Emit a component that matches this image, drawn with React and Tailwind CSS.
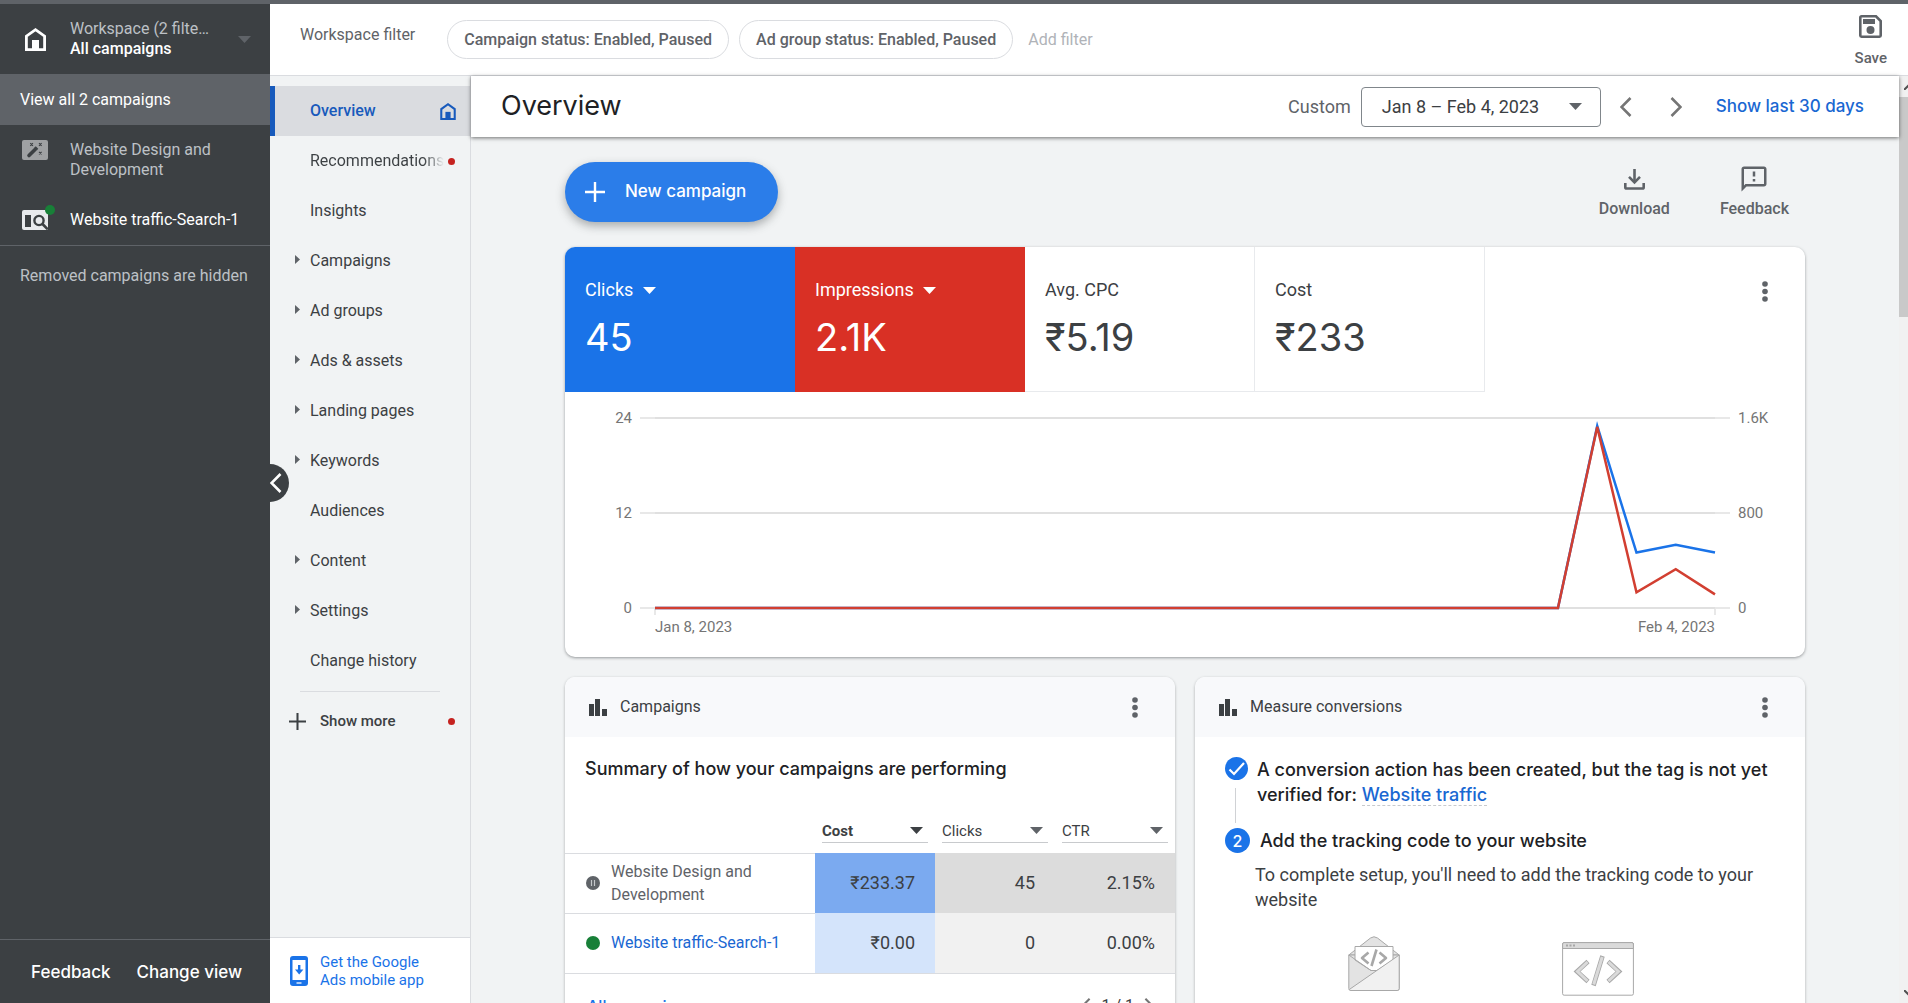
import React from "react";
import { MdOutlineFeedback } from "react-icons/md";

const navItems = [
  { label: "Recommendations", dot: true },
  { label: "Insights" },
  { label: "Campaigns", expandable: true },
  { label: "Ad groups", expandable: true },
  { label: "Ads & assets", expandable: true },
  { label: "Landing pages", expandable: true },
  { label: "Keywords", expandable: true },
  { label: "Audiences" },
  { label: "Content", expandable: true },
  { label: "Settings", expandable: true },
  { label: "Change history" },
];

const metrics = [
  { label: "Clicks", value: "45", tone: "bg-[#1a73e8] text-white", menu: true },
  { label: "Impressions", value: "2.1K", tone: "bg-[#d93025] text-white", menu: true },
  { label: "Avg. CPC", value: "₹5.19", tone: "border-r border-b border-[#e8eaed] text-[#3c4043]" },
  { label: "Cost", value: "₹233", tone: "border-r border-b border-[#e8eaed] text-[#3c4043]" },
];

// One value per day, Jan 8 - Feb 4
const clicks = [...Array(24).fill(0), 23, 7, 8, 7];
const impressions = [...Array(24).fill(0), 1525, 132, 326, 115];

const toPoints = (values, max) =>
  values
    .map((v, i) => `${15 + (i * 1060) / (values.length - 1)},${191 - (v / max) * 190}`)
    .join(" ");

const HomeIcon = ({ className }) => (
  <svg viewBox="0 0 21 23" className={className} fill="none" aria-hidden="true">
    <path d="M1.4 21.6V8.2L10.5 1.7l9.1 6.5v13.4z" stroke="currentColor" strokeWidth="2.8" />
    <path d="M7 12h7v10H7z" fill="currentColor" />
  </svg>
);

const Chevron = ({ className, flip }) => (
  <svg viewBox="0 0 12 20" className={className} fill="none" aria-hidden="true">
    <path
      d={flip ? "M1.5 1l9 9-9 9" : "M10.5 1l-9 9 9 9"}
      stroke="currentColor"
      strokeWidth="2.6"
    />
  </svg>
);

const Caret = ({ className }) => (
  <svg viewBox="0 0 13 7" className={className} aria-hidden="true">
    <path d="M0 0h13L6.5 7z" fill="currentColor" />
  </svg>
);

const PlusIcon = ({ className }) => (
  <svg viewBox="0 0 20 20" className={className} aria-hidden="true">
    <path d="M10 0v20M0 10h20" stroke="currentColor" strokeWidth="2.4" />
  </svg>
);

const WandIcon = () => (
  <svg viewBox="0 0 26 20" className="h-5 w-[26px] shrink-0" aria-hidden="true">
    <rect width="26" height="20" rx="2" fill="#9fa1a3" />
    <path d="M7 15.5l6.3-6.3" stroke="#3c4043" strokeWidth="3.6" strokeLinecap="round" />
    <path d="M13.6 8.9l1.4-1.4" stroke="#3c4043" strokeWidth="3.6" />
    <path
      d="M8.3 3.2l2.6 2.6M10.9 3.2L8.3 5.8M17 3.2l2.6 2.6M19.6 3.2L17 5.8M17 11.8l2.6 2.6M19.6 11.8L17 14.4"
      stroke="#3c4043"
      strokeWidth="1.2"
    />
  </svg>
);

const SearchCampaignIcon = () => (
  <svg viewBox="0 0 26 20" className="h-5 w-[26px]" aria-hidden="true">
    <rect width="26" height="20" rx="2" fill="#e8eaed" />
    <path d="M3 5h6v12H3z" fill="#3c4043" />
    <circle cx="17" cy="10.5" r="4.6" fill="none" stroke="#3c4043" strokeWidth="2.4" />
    <path d="M20.5 14l5 5" stroke="#3c4043" strokeWidth="2.6" />
  </svg>
);

const SaveIcon = () => (
  <svg viewBox="0 0 23 23" className="size-[23px]" aria-hidden="true">
    <path
      d="M2.5 1.3H17L21.7 6v14.5a1.2 1.2 0 01-1.2 1.2h-18a1.2 1.2 0 01-1.2-1.2v-18a1.2 1.2 0 011.2-1.2z"
      fill="none"
      stroke="currentColor"
      strokeWidth="2.6"
    />
    <path d="M4 4h12v5H4z" fill="currentColor" />
    <circle cx="11.5" cy="15" r="4" fill="currentColor" />
  </svg>
);

const DownloadIcon = () => (
  <svg viewBox="0 0 21 21" className="size-[21px]" fill="none" stroke="currentColor" aria-hidden="true">
    <path d="M10.5 0v13" strokeWidth="2.6" />
    <path d="M5 7.8l5.5 5.5L16 7.8" strokeWidth="2.6" />
    <path d="M1.3 14v4.2a1.3 1.3 0 001.3 1.3h15.8a1.3 1.3 0 001.3-1.3V14" strokeWidth="2.6" />
  </svg>
);

const PhoneIcon = () => (
  <svg viewBox="0 0 18 30" className="h-[30px] w-[18px] shrink-0" aria-hidden="true">
    <rect width="18" height="30" rx="3" fill="#1a73e8" />
    <path d="M2.5 4h13v20h-13z" fill="#fff" />
    <path d="M8 9h2.4v4.5h3L9.2 18.4 5 13.5h3z" fill="#1a73e8" />
    <path d="M6.5 27h5" stroke="#fff" strokeWidth="1.3" />
  </svg>
);

const BarsIcon = () => (
  <svg viewBox="0 0 18 17" className="h-[17px] w-[18px]" fill="#3c4043" aria-hidden="true">
    <path d="M0 5h5v12H0zM6 0h5v17H6zM13 10h5v7h-5z" />
  </svg>
);

const EnvelopeArt = () => (
  <svg viewBox="0 0 52 55" className="h-[55px] w-[52px]" stroke="#a8a8a8" strokeLinejoin="round" aria-hidden="true">
    <path d="M.8 19L22.5 2q3.5-2.5 7 0L51.2 19z" fill="#e3e3e3" />
    <path d="M.8 19h50.4v33.5a2 2 0 01-2 2H2.8a2 2 0 01-2-2z" fill="#e3e3e3" />
    <path d="M7 10.5h38V24L29 34.5h-6L7 24z" fill="#fff" />
    <path d="M1.3 53.5L51.2 19v33.5a2 2 0 01-2 2H2.8q-1 0-1.5-1z" fill="#f1f1f1" />
    <path d="M.8 19L23 34.5h6" fill="none" />
    <path
      d="M20.5 16.5L14 22l6.5 5.5M31.5 16.5L38 22l-6.5 5.5M28.5 13.5l-5 16.5"
      fill="none"
      strokeWidth="2.6"
    />
  </svg>
);

const BrowserArt = () => (
  <svg viewBox="0 0 72 54" className="h-[54px] w-[72px]" stroke="#a8a8a8" aria-hidden="true">
    <rect x=".6" y=".6" width="70.8" height="52.6" rx="1.5" fill="#fff" />
    <path d="M.6 6.5V2Q.6.6 2 .6h68q1.4 0 1.4 1.4v4.5z" fill="#dadada" />
    <path d="M4 3.5h2M7.500 3.500h2M11 3.500h2" strokeWidth="2" />
    <path d="M26 19.5l-11 10 11 10M46 19.5l11 10-11 10M40.5 14l-9 29.5" fill="none" strokeWidth="4.6" />
    <path
      d="M25.5 20l-10 9.5 10 9.5M46.5 20l10 9.5-10 9.5M40.2 15l-8.5 27.5"
      fill="none"
      stroke="#dadada"
      strokeWidth="3"
    />
  </svg>
);

const Kebab = ({ label }) => (
  <button aria-label={label} className="flex w-9 justify-center text-[#5f6368]">
    <svg viewBox="0 0 6 21" className="h-[21px] w-[6px]" fill="currentColor" aria-hidden="true">
      <circle cx="3" cy="3" r="2.8" />
      <circle cx="3" cy="10.5" r="2.8" />
      <circle cx="3" cy="18" r="2.8" />
    </svg>
  </button>
);

const CampaignSidebar = () => (
  <aside className="relative z-20 flex w-[270px] shrink-0 flex-col bg-[#3c4043] text-base leading-5">
    <button className="flex h-[70px] items-center pl-[25px] text-left">
      <HomeIcon className="h-[23px] w-[21px] text-white" />
      <span className="ml-6 w-[140px]">
        <span className="block truncate text-[#bdc1c6]">Workspace (2 filters)</span>
        <span className="block font-medium text-white">All campaigns</span>
      </span>
      <Caret className="ml-7 h-[7px] w-[13px] text-[#5f6368]" />
    </button>
    <a href="#all" className="flex h-[51px] items-center bg-[#5f6368] px-5 text-white">
      View all 2 campaigns
    </a>
    <a href="#design" className="flex py-[15px] pl-[22px] text-[#bdc1c6]">
      <WandIcon />
      <span className="ml-[22px] w-40">Website Design and Development</span>
    </a>
    <a href="#traffic" className="flex border-b border-[#5f6368] py-[15px] pl-[22px] text-white">
      <span className="relative">
        <SearchCampaignIcon />
        <span className="absolute -top-[5px] -right-[7px] size-[10px] rounded-full bg-[#188038]" />
      </span>
      <span className="ml-[22px]">Website traffic-Search-1</span>
    </a>
    <p className="px-5 py-5 text-[#bdc1c6]">Removed campaigns are hidden</p>

    <div className="mt-auto flex h-16 items-center gap-[26px] border-t border-[#5f6368] px-[31px] font-['Inter'] text-[17px] font-medium text-white">
      <button>Feedback</button>
      <button className="whitespace-nowrap">Change view</button>
    </div>

    {/* Collapse handle */}
    <button
      aria-label="Collapse navigation"
      className="absolute top-[460px] left-full flex h-[38px] w-[19px] items-center rounded-r-full bg-[#3c4043] text-white"
    >
      <Chevron className="h-5 w-3" />
    </button>
  </aside>
);

const PageNav = () => (
  <nav className="flex w-[201px] shrink-0 flex-col border-r border-[#dadce0] bg-[#f1f3f4] pt-[10px] text-base text-[#3c4043]">
    <a
      href="#overview"
      className="flex h-[50px] items-center border-l-[5px] border-[#185abc] bg-[#dadce0] pr-[14px] pl-[35px] font-medium text-[#185abc]"
    >
      Overview
      <HomeIcon className="ml-auto h-[17px] w-4" />
    </a>
    {navItems.map((item) => (
      <a
        key={item.label}
        href={"#" + item.label}
        className="flex h-[50px] items-center pr-[15px]"
      >
        <span className="flex w-10 shrink-0 justify-end pr-[10px] pb-[3px]">
          {item.expandable && (
            <svg viewBox="0 0 5 9" className="h-[9px] w-[5px]" fill="#5f6368" aria-hidden="true">
              <path d="M0 0l5 4.500L0 9z" />
            </svg>
          )}
        </span>
        {item.dot ? (
          <>
            <span className="bg-linear-to-r from-[#3c4043] from-85% to-[#f1f3f4] bg-clip-text text-transparent">
              {item.label}
            </span>
            <span className="ml-auto size-[7px] shrink-0 rounded-full bg-[#c5221f]" />
          </>
        ) : (
          item.label
        )}
      </a>
    ))}
    <hr className="mx-[30px] mt-[5px] border-[#dadce0]" />
    <button className="flex items-center py-[18px] pr-[15px] pl-[19px] text-[15px] font-medium">
      <PlusIcon className="mr-[14px] size-[17px]" />
      Show more
      <span className="ml-auto size-[7px] rounded-full bg-[#c5221f]" />
    </button>
    <a
      href="#app"
      className="mt-auto flex h-[66px] items-center gap-3 border-t border-[#dadce0] bg-white pl-5 text-[15px] leading-[18px] text-[#1a73e8]"
    >
      <PhoneIcon />
      <span className="w-28">Get the Google Ads mobile app</span>
    </a>
  </nav>
);

const FilterBar = () => (
  <header className="flex h-[72px] shrink-0 items-center border-b border-[#dadce0] bg-white pr-[21px] pl-[30px] text-base text-[#5f6368]">
    <span className="mb-[10px]">Workspace filter</span>
    <button className="ml-8 h-[39px] rounded-full border border-[#dadce0] px-4 font-medium">
      Campaign status: Enabled, Paused
    </button>
    <button className="ml-[10px] h-[39px] rounded-full border border-[#dadce0] px-4 font-medium">
      Ad group status: Enabled, Paused
    </button>
    <input
      type="text"
      aria-label="Add filter"
      placeholder="Add filter"
      className="ml-[15px] min-w-0 flex-1 outline-none placeholder:text-[#b0b3b8]"
    />
    <button className="flex flex-col items-center gap-[10px] pt-1 text-[15px] leading-5 font-medium">
      <SaveIcon />
      Save
    </button>
  </header>
);

const PageHeader = () => (
  <div className="relative z-10 flex h-[61px] shrink-0 items-center bg-white pr-[35px] pl-[30px] shadow-[0_1px_4px_rgba(0,0,0,0.55)]">
    <h1 className="font-['Inter'] text-[27px] text-[#202124]">Overview</h1>
    <span className="ml-auto text-lg text-[#5f6368]">Custom</span>
    <button className="ml-[10px] flex h-10 w-60 items-center justify-between rounded border border-[#80868b] pr-[18px] pl-5 text-lg text-[#3c4043]">
      Jan 8 – Feb 4, 2023
      <Caret className="h-[7px] w-[13px] text-[#5f6368]" />
    </button>
    <button aria-label="Previous period" className="ml-[19px] text-[#757575]">
      <Chevron className="h-5 w-3" />
    </button>
    <button aria-label="Next period" className="ml-[38px] text-[#757575]">
      <Chevron className="h-5 w-3" flip />
    </button>
    <a href="#last30" className="ml-[34px] font-['Inter'] text-[17px] font-medium text-[#1967d2]">
      Show last 30 days
    </a>
  </div>
);

const Chart = () => (
  <div className="flex px-[35px] pt-4 pb-5 text-[15px] leading-5 text-[#757575]">
    <div className="flex h-[210px] w-8 flex-col justify-between text-right">
      <span>24</span>
      <span>12</span>
      <span>0</span>
    </div>
    <div className="ml-2 min-w-0 flex-1 pt-[9px]">
      <svg viewBox="0 0 1090 200" preserveAspectRatio="none" className="h-[200px] w-full" aria-label="Clicks and impressions by day">
        <path d="M0 1h1090M0 96h1090M0 191h1090M15 191v7M1075 191v7" stroke="#e8e8e8" strokeWidth="2" />
        <path d="M15 1h1060M15 96h1060M15 191h1060" stroke="#e0e0e0" strokeWidth="2" />
        <polyline points={toPoints(clicks, 24)} fill="none" stroke="#1a73e8" strokeWidth="2.5" vectorEffect="non-scaling-stroke" />
        <polyline points={toPoints(impressions, 1600)} fill="none" stroke="#d23f31" strokeWidth="2.5" vectorEffect="non-scaling-stroke" />
      </svg>
      <div className="flex justify-between px-[15px]">
        <span>Jan 8, 2023</span>
        <span>Feb 4, 2023</span>
      </div>
    </div>
    <div className="ml-2 flex h-[210px] w-8 flex-col justify-between">
      <span>1.6K</span>
      <span>800</span>
      <span>0</span>
    </div>
  </div>
);

const Card = ({ title, children }) => (
  <section className="min-w-0 overflow-hidden rounded-[10px] bg-white shadow-[0_1px_3px_rgba(60,64,67,0.4)]">
    <header className="flex h-[60px] items-center bg-[#f8f9fb] pr-[22px] pl-6 text-base text-[#3c4043]">
      <BarsIcon />
      <h2 className="ml-[13px]">{title}</h2>
      <span className="ml-auto">
        <Kebab label={title + " options"} />
      </span>
    </header>
    {children}
  </section>
);

const ColumnSelect = ({ name, bold }) => (
  <th className="w-[120px] pb-[10px] pl-[7px] font-normal">
    <span className="flex w-[106px] items-center border-b border-[#c8cacd] pb-px">
      <select
        aria-label={name + " column"}
        className={
          "h-[21px] flex-1 appearance-none text-[15px] outline-none " +
          (bold ? "font-bold" : "font-normal")
        }
      >
        <option>{name}</option>
      </select>
      <Caret
        className={
          "pointer-events-none mr-[5px] h-[7px] w-[13px] " +
          (bold ? "text-[#3c4043]" : "text-[#5f6368]")
        }
      />
    </span>
  </th>
);

const CampaignsCard = () => (
  <Card title="Campaigns">
    <h3 className="px-5 pt-5 font-['Inter'] text-lg leading-6 font-medium text-[#202124]">
      Summary of how your campaigns are performing
    </h3>
    <table className="mt-[39px] w-full table-fixed border-b border-[#dadce0] text-[#3c4043]">
      <thead>
        <tr>
          <td />
          <ColumnSelect name="Cost" bold />
          <ColumnSelect name="Clicks" />
          <ColumnSelect name="CTR" />
        </tr>
      </thead>
      <tbody className="text-right text-lg">
        <tr className="h-[60px]">
          <td className="border-t border-[#dadce0] pl-[21px] text-left text-base leading-[23px] text-[#5f6368]">
            <span className="flex items-center">
              <svg viewBox="0 0 14 14" className="mr-[11px] size-[14px]" aria-hidden="true">
                <circle cx="7" cy="7" r="7" fill="#5f6368" />
                <path d="M5.5 4v6M8.5 4v6" stroke="#c4c7ca" strokeWidth="1.2" />
              </svg>
              <span className="w-40">Website Design and Development</span>
            </span>
          </td>
          <td className="bg-[#7baaf0] pr-5">₹233.37</td>
          <td className="bg-[#dcdcdc] pr-5">45</td>
          <td className="bg-[#dcdcdc] pr-5">2.15%</td>
        </tr>
        <tr className="h-[60px]">
          <td className="border-t border-[#dadce0] pl-[21px] text-left text-base">
            <span className="flex items-center">
              <span className="mr-[11px] size-[14px] rounded-full bg-[#188038]" />
              <a href="#traffic" className="text-[#1967d2]">
                Website traffic-Search-1
              </a>
            </span>
          </td>
          <td className="bg-[#d4e4fb] pr-5">₹0.00</td>
          <td className="bg-[#f1f1f1] pr-5">0</td>
          <td className="bg-[#f1f1f1] pr-5">0.00%</td>
        </tr>
      </tbody>
    </table>
    <footer className="flex h-16 items-center pr-[21px] pl-[22px] text-base text-[#3c4043]">
      <a href="#campaigns" className="font-['Inter'] font-medium text-[#1a73e8]">
        All campaigns
      </a>
      <button aria-label="Previous" className="ml-auto text-[#757575]">
        <Chevron className="h-4 w-[10px]" />
      </button>
      <span className="mx-[10px]">1 / 1</span>
      <button aria-label="Next" className="text-[#757575]">
        <Chevron className="h-4 w-[10px]" flip />
      </button>
    </footer>
  </Card>
);

const ConversionsCard = () => (
  <Card title="Measure conversions">
    <ol className="px-[30px] pt-5 font-['Inter'] text-lg leading-[25px] font-medium text-[#202124]">
      <li className="flex">
        <div className="flex w-6 shrink-0 flex-col">
          <svg viewBox="0 0 23 23" className="size-[23px] shrink-0" aria-hidden="true">
            <circle cx="11.5" cy="11.5" r="11.5" fill="#1a73e8" />
            <path d="M4.5 12.5L9 17 19 6" fill="none" stroke="#fff" strokeWidth="2.2" />
          </svg>
          <span className="mt-2 ml-[10px] h-[35px] w-px bg-[#d0d2d5]" />
        </div>
        <p className="ml-2">
          A conversion action has been created, but the tag is not yet verified for:{" "}
          <a href="#goal" className="border-b border-dashed border-[#c8cacd] text-[#1967d2]">
            Website traffic
          </a>
        </p>
      </li>
      <li className="mt-[5px] flex">
        <span className="flex size-[25px] items-center justify-center rounded-full bg-[#1a73e8] text-base text-white">
          2
        </span>
        <p className="ml-[10px]">Add the tracking code to your website</p>
      </li>
    </ol>
    <p className="mt-[9px] pr-[40px] pl-[60px] text-lg leading-[25px] text-[#3c4043]">
      To complete setup, you'll need to add the tracking code to your website
    </p>
    <div className="mt-6 grid grid-cols-2 pr-[95px] pb-10 pl-[67px]">
      <div className="flex justify-center">
        <EnvelopeArt />
      </div>
      <div className="mt-[6px] flex justify-center">
        <BrowserArt />
      </div>
    </div>
  </Card>
);

const Overview = () => (
  <div className="min-h-0 flex-1 overflow-hidden">
    <div className="mx-auto max-w-[1280px] px-5 pt-[25px]">
      <div className="flex items-center justify-between">
        <button className="flex h-[60px] items-center rounded-full bg-[#2b7de9] pr-8 pl-5 font-['Inter'] text-[17px] font-medium text-white shadow-[0_4px_10px_rgba(60,64,67,0.4)]">
          <PlusIcon className="mr-5 size-5" />
          New campaign
        </button>
        <div className="flex gap-[50px] pr-4 text-base leading-5 font-medium text-[#5f6368]">
          <button className="flex flex-col items-center gap-[6px]">
            <span className="flex h-7 items-center">
              <DownloadIcon />
            </span>
            Download
          </button>
          <button className="flex flex-col items-center gap-[6px]">
            <span className="flex h-7 items-center">
              <MdOutlineFeedback className="size-[30px]" />
            </span>
            Feedback
          </button>
        </div>
      </div>

      {/* Metrics and chart */}
      <section className="mt-[25px] overflow-hidden rounded-[10px] bg-white shadow-[0_1px_3px_rgba(60,64,67,0.5)]">
        <div className="flex">
          {metrics.map((m) => (
            <div key={m.label} className={"h-[145px] w-[230px] px-5 pt-[31px] " + m.tone}>
              <div className="flex items-center gap-[9px] text-lg leading-6">
                {m.menu ? (
                  <>
                    <select aria-label="Metric" className="appearance-none outline-none">
                      <option>{m.label}</option>
                    </select>
                    <Caret className="pointer-events-none h-[7px] w-[13px]" />
                  </>
                ) : (
                  m.label
                )}
              </div>
              <div className="mt-[11px] font-['Inter'] text-[38px] leading-[48px]">{m.value}</div>
            </div>
          ))}
          <div className="mt-[34px] mr-[22px] ml-auto">
            <Kebab label="Chart options" />
          </div>
        </div>
        <Chart />
      </section>

      <div className="mt-5 grid grid-cols-2 gap-5">
        <CampaignsCard />
        <ConversionsCard />
      </div>
    </div>
  </div>
);

const ScrollTrack = () => (
  <div className="flex w-[9px] shrink-0 flex-col overflow-hidden bg-[#f1f1f1]" aria-hidden="true">
    <div className="flex h-[21px] items-center pl-[5px] text-[#505050]">
      <svg viewBox="0 0 10 6" className="h-[6px] w-[10px] shrink-0" fill="none" stroke="currentColor" strokeWidth="2">
        <path d="M0 6l5-5 5 5" />
      </svg>
    </div>
    <div className="h-[220px] bg-[#c9c9c9]" />
    <div className="mt-auto flex h-[21px] items-center pl-[5px] text-[#505050]">
      <svg viewBox="0 0 10 6" className="h-[6px] w-[10px] shrink-0" fill="none" stroke="currentColor" strokeWidth="2">
        <path d="M0 0l5 5 5-5" />
      </svg>
    </div>
  </div>
);

const App = () => {
  return (
    <div className="flex h-screen flex-col overflow-hidden bg-[#f1f3f4] font-['Roboto',sans-serif]">
      <div className="h-1 shrink-0 bg-[#5f6368]" />
      <div className="flex min-h-0 flex-1">
        <CampaignSidebar />
        <div className="flex min-w-0 flex-1 flex-col">
          <FilterBar />
          <div className="flex min-h-0 flex-1">
            <PageNav />
            <main className="flex min-w-0 flex-1 flex-col">
              <PageHeader />
              <Overview />
            </main>
            <ScrollTrack />
          </div>
        </div>
      </div>
    </div>
  );
};

export default App;
